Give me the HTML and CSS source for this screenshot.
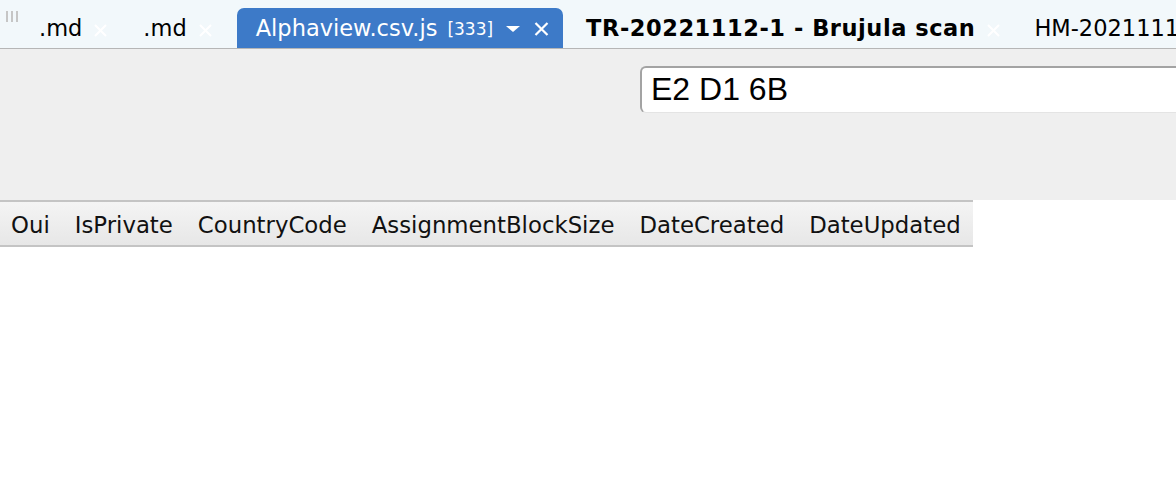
FILE: index.html
```html
<!DOCTYPE html>
<html>
<head>
<meta charset="utf-8">
<link rel="stylesheet" href="styles.css">
</head>
<body>
<div class="tabbar">
  <div class="grip"><span></span><span></span><span></span></div>
  <div class="tab">
    <span class="label">.md</span>
    <svg class="close" width="15" height="13" viewBox="0 0 15 13"><path d="M2 1 L13 12 M13 1 L2 12" stroke="#ffffff" stroke-width="2"/></svg>
  </div>
  <div class="tab">
    <span class="label">.md</span>
    <svg class="close" width="15" height="13" viewBox="0 0 15 13"><path d="M2 1 L13 12 M13 1 L2 12" stroke="#ffffff" stroke-width="2"/></svg>
  </div>
  <div class="tab active">
    <span class="label">Alphaview.csv.js</span>
    <span class="count">[333]</span>
    <svg class="caret" width="14" height="6" viewBox="0 0 14 6"><path d="M0 0 H14 L7 6 Z" fill="#ffffff"/></svg>
    <svg class="close" width="15" height="14" viewBox="0 0 15 14"><path d="M1.5 1 L13.5 13 M13.5 1 L1.5 13" stroke="#ffffff" stroke-width="2.2"/></svg>
  </div>
  <div class="tab bold">
    <span class="label">TR-20221112-1 - Brujula scan</span>
    <svg class="close" width="15" height="13" viewBox="0 0 15 13"><path d="M2 1 L13 12 M13 1 L2 12" stroke="#ffffff" stroke-width="2"/></svg>
  </div>
  <div class="tab">
    <span class="label">HM-20211118-2 - Notes</span>
  </div>
</div>
<div class="toolbar">
  <div class="search">E2 D1 6B</div>
</div>
<div class="header">
  <div class="col">Oui</div>
  <div class="col">IsPrivate</div>
  <div class="col">CountryCode</div>
  <div class="col">AssignmentBlockSize</div>
  <div class="col">DateCreated</div>
  <div class="col">DateUpdated</div>
</div>
</body>
</html>
```
FILE: styles.css
```css
html, body {
  margin: 0;
  padding: 0;
  background: #ffffff;
  overflow: hidden;
}
body {
  width: 1176px;
  height: 486px;
  font-family: "DejaVu Sans", sans-serif;
}
.tabbar {
  display: flex;
  align-items: flex-end;
  height: 48px;
  background: #f2f8fb;
  border-bottom: 1px solid #b6b6b6;
  overflow: hidden;
  white-space: nowrap;
}
.grip {
  align-self: flex-start;
  display: flex;
  gap: 3px;
  padding: 11px 0 0 6px;
  margin-right: 3px;
  flex-shrink: 0;
}
.grip span {
  width: 2px;
  height: 11px;
  background: #c6c6c6;
}
.tab {
  display: flex;
  align-items: center;
  height: 40px;
  line-height: 40px;
  padding: 0 17px 0 18px;
  gap: 11px;
  font-size: 22.5px;
  color: #000000;
  flex-shrink: 0;
}
.tab .close {
  margin-top: 4px;
  flex-shrink: 0;
}
.tab.active {
  background: #3d7ac8;
  color: #ffffff;
  border-radius: 7px 7px 0 0;
  margin: 0 5px 0 7px;
  padding: 0 14px 0 19px;
  gap: 0;
}
.tab.active .count {
  font-size: 17px;
  margin-left: 10px;
  margin-right: 13px;
  padding-top: 2px;
}
.tab.active .caret {
  margin-top: 1px;
  margin-right: 14px;
}
.tab.active .close {
  margin-top: 2px;
}
.tab.bold {
  padding-right: 15px;
}
.tab.bold .label {
  font-weight: bold;
  letter-spacing: 0.55px;
}
.toolbar {
  height: 151px;
  box-sizing: border-box;
  background: #efefef;
  padding: 17px 0 0 640px;
  overflow: hidden;
}
.search {
  width: 600px;
  height: 47px;
  box-sizing: border-box;
  background: #ffffff;
  border-top: 2px solid #a3a3a3;
  border-left: 2px solid #a3a3a3;
  border-bottom: 1px solid #e4e4e4;
  border-radius: 6px 0 0 6px;
  padding-left: 9px;
  font-family: "Liberation Sans", Arial, sans-serif;
  font-size: 32px;
  line-height: 43px;
  color: #000000;
}
.header {
  display: flex;
  width: fit-content;
  height: 47px;
  box-sizing: border-box;
  border-top: 2px solid #c4c4c4;
  border-bottom: 2px solid #c4c4c4;
  background: linear-gradient(#f4f4f4, #e7e7e7);
}
.col {
  padding: 5px 12.5px 0;
  line-height: 37px;
  font-size: 22.8px;
  color: #111111;
  white-space: nowrap;
}
.col:first-child {
  padding-left: 11px;
}
```
